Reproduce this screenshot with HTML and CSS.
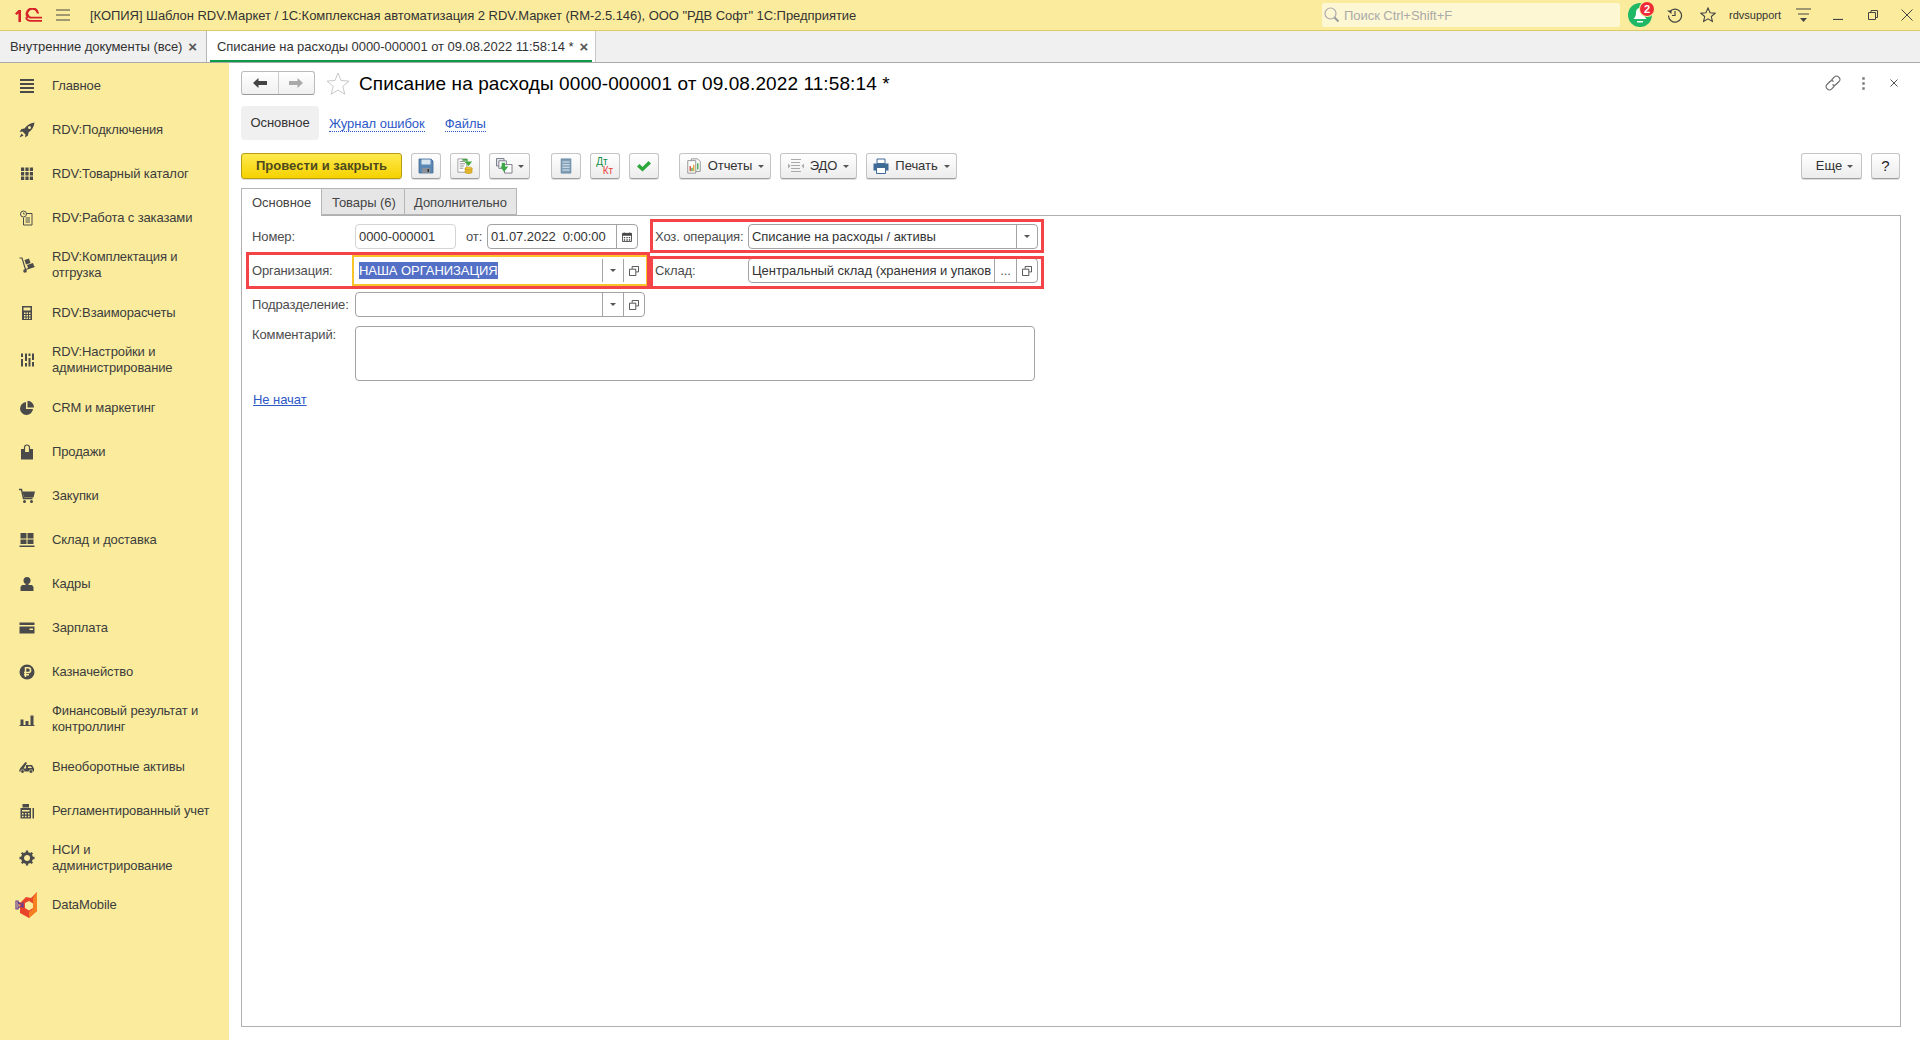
FILE: index.html
```html
<!DOCTYPE html>
<html lang="ru">
<head>
<meta charset="utf-8">
<title>Списание на расходы</title>
<link rel="stylesheet" href="styles.css">
</head>
<body>
<svg class="defs" width="0" height="0" aria-hidden="true">
  <symbol id="popup" viewBox="0 0 11 11"><path d="M3.500 3V.5h7v6H8" fill="none" stroke="#444"/><path d="M.5 3.500h7v7h-7z" fill="none" stroke="#444"/></symbol>
</svg>
<header class="topbar">
  <svg class="logo" viewBox="0 0 28 15"><path d="M1 5.500 4.500 2H7v12H4.400V5.400L2.600 7z" fill="#d6232a"/><path d="M24 6.500A5.600 5.600 0 1 0 14 10.500" fill="none" stroke="#d6232a" stroke-width="2.400" transform="translate(0 -1)"/><path d="M12 9.200c.6 2.600 2.600 3.600 5 3.600H28M13.800 6.500c.5 2 1.700 3.200 3.600 3.200H28" fill="none" stroke="#d6232a" stroke-width="1.800"/></svg>
  <svg class="burger" viewBox="0 0 14 12"><path d="M0 1h14M0 6h14M0 11h14" stroke="#444" stroke-width="1.200"/></svg>
  <div class="apptitle">[КОПИЯ] Шаблон RDV.Маркет / 1С:Комплексная автоматизация 2 RDV.Маркет (RM-2.5.146), ООО "РДВ Софт" 1С:Предприятие</div>
  <div class="search">
    <svg class="search-ico" viewBox="0 0 16 16"><circle cx="6.500" cy="6.500" r="5.500" fill="none" stroke="#aaa" stroke-width="1.200"/><path d="m10.500 10.500 4 4" stroke="#999" stroke-width="2"/></svg>
    <span>Поиск Ctrl+Shift+F</span>
  </div>
  <div class="bell">
    <svg class="bell-ico" viewBox="0 0 24 24"><circle cx="12" cy="12" r="12" fill="#1fb866"/><path d="M12 5c-3 0-4 2.500-4 5 0 3-1 4.500-2.500 6h13C17 14.500 16 13 16 10c0-2.500-1-5-4-5z" fill="#fff"/><path d="M9 18h6v1.500H9z" fill="#fff"/></svg>
    <span class="badge">2</span>
  </div>
  <svg class="tb-ico history" viewBox="0 0 16 16"><path d="M3 4.500A6.500 6.500 0 1 1 1.500 8.500" fill="none" stroke="#444" stroke-width="1.200"/><path d="M0 3.500h4.500V7z" fill="#444"/><path d="M8 4v4.500h-3" fill="none" stroke="#444" stroke-width="1.200"/></svg>
  <svg class="tb-ico star-top" viewBox="0 0 16 16"><path d="m8 1 2.100 4.700 5 .5-3.800 3.300 1.100 5L8 11.900l-4.400 2.600 1.100-5L.9 6.200l5-.5z" fill="none" stroke="#444" stroke-width="1.100"/></svg>
  <span class="user">rdvsupport</span>
  <svg class="tb-ico usermenu" viewBox="0 0 15 16"><path d="M0 2h15M2 7h11" stroke="#444" stroke-width="1.100"/><path d="M4 11h7l-3.500 4z" fill="#444"/></svg>
  <svg class="win minimize" viewBox="0 0 10 10"><path d="M0 9.500h10" stroke="#444" stroke-width="1.200"/></svg>
  <svg class="win restore" viewBox="0 0 10 10"><path d="M3 2.500V.5h6.500v7H7.500" fill="none" stroke="#444"/><path d="M.5 2.500h7v7h-7z" fill="none" stroke="#444"/></svg>
  <svg class="win closewin" viewBox="0 0 12 12"><path d="m.5.500 11 11m0-11-11 11" stroke="#444" stroke-width="1"/></svg>
</header>

<nav class="tabstrip">
  <div class="wintab"><span>Внутренние документы (все)</span><b class="x">×</b></div>
  <div class="wintab active"><span>Списание на расходы 0000-000001 от 09.08.2022 11:58:14 *</span><b class="x">×</b></div>
</nav>

<div class="workspace">
  <aside class="sidebar">
    <div class="item"><svg viewBox="0 0 16 16"><path d="M1 2h14M1 6h14M1 10h14M1 14h14" stroke="#4a4a4a" stroke-width="2"/></svg><span>Главное</span></div>
    <div class="item"><svg viewBox="0 0 16 16"><path d="M15.500.5C11 1 8 3 5.500 6.500L2.500 7 .5 10l3-.5 3 3L6 15.500l3-2 .5-3C13 8 15 5 15.500.5z" fill="#4a4a4a"/><circle cx="10.500" cy="5.500" r="1.500" fill="#fbec9d"/><path d="M2.500 11.500 .5 15.500l4-2z" fill="#4a4a4a"/></svg><span>RDV:Подключения</span></div>
    <div class="item"><svg viewBox="0 0 16 16"><path d="M2 1.500h3.200v3.500H2zM6.400 1.500h3.200v3.500H6.400zM10.800 1.500H14v3.500h-3.200zM2 6h3.200v3.500H2zM6.400 6h3.200v3.500H6.400zM10.800 6H14v3.500h-3.200zM2 10.500h3.200V14H2zM6.400 10.500h3.200V14H6.400zM10.800 10.500H14V14h-3.200z" fill="#4a4a4a"/></svg><span>RDV:Товарный каталог</span></div>
    <div class="item"><svg viewBox="0 0 16 16"><circle cx="4.500" cy="4" r="3" fill="none" stroke="#4a4a4a"/><path d="M4.500 2.500V4h1.500" fill="none" stroke="#4a4a4a" stroke-width=".8"/><path d="M7.500 3.500h5.500v11.500H4.500V7.500" fill="none" stroke="#4a4a4a"/><path d="M6.500 8h4.500M6.500 10h4.500M6.500 12h4.500" stroke="#4a4a4a"/></svg><span>RDV:Работа с заказами</span></div>
    <div class="item"><svg viewBox="0 0 16 16"><path d="M.5 1H3l3.500 11.500 9-3" fill="none" stroke="#4a4a4a" stroke-width="1.200"/><circle cx="6" cy="14" r="1.800" fill="#4a4a4a"/><path d="m5.500 3 4.500-1.500 1.500 4.500-4.500 1.500zM8 8l6-2 1.300 3.800-6 2z" fill="#4a4a4a"/></svg><span>RDV:Комплектация и<br>отгрузка</span></div>
    <div class="item"><svg viewBox="0 0 16 16"><path d="M3 1h10v14H3z" fill="#4a4a4a"/><path d="M4.500 2.500h7v3h-7zM5 7.500h1.500V9H5zM7.500 7.500H9V9H7.500zM10 7.500h1.500V9H10zM5 10h1.500v1.500H5zM7.500 10H9v1.500H7.500zM10 10h1.500v1.500H10zM5 12.500h1.500V14H5zM7.500 12.500H9V14H7.500zM10 12.500h1.500V14H10z" fill="#fbec9d"/></svg><span>RDV:Взаиморасчеты</span></div>
    <div class="item"><svg viewBox="0 0 16 16"><path d="M3 1.500v3.500M3 7v7.500M7 1.500V9M7 11v3.500M10.500 1.500V4M10.500 6v8.500M14 1.500V8M14 10v4.500" stroke="#4a4a4a" stroke-width="2"/></svg><span>RDV:Настройки и<br>администрирование</span></div>
    <div class="item"><svg viewBox="0 0 16 16"><path d="M7 2a6.500 6.500 0 1 0 7 7H7z" fill="#4a4a4a"/><path d="M8.500.8v6.700H15A6.700 6.700 0 0 0 8.500.8z" fill="#4a4a4a"/></svg><span>CRM и маркетинг</span></div>
    <div class="item"><svg viewBox="0 0 16 16"><path d="M2 5h12v10.500H2z" fill="#4a4a4a"/><path d="M5.500 8V3.500a2.500 2.500 0 0 1 5 0V8" fill="none" stroke="#4a4a4a" stroke-width="1.200"/><path d="M6.100 5h3.800v3H6.100z" fill="#fbec9d"/></svg><span>Продажи</span></div>
    <div class="item"><svg viewBox="0 0 16 16"><path d="M0 1.500h2.500l2 9h9" fill="none" stroke="#4a4a4a" stroke-width="1.400"/><path d="M3.500 3.500H16l-1.500 6H5z" fill="#4a4a4a"/><circle cx="5.500" cy="13.500" r="1.500" fill="#4a4a4a"/><circle cx="12.500" cy="13.500" r="1.500" fill="#4a4a4a"/></svg><span>Закупки</span></div>
    <div class="item"><svg viewBox="0 0 16 16"><path d="M1.500 1h6v5.500h-6zM8.500 1h6v5.500h-6zM1.500 7.500h6V12h-6zM8.500 7.500h6V12h-6zM.5 13.500h15V15H.5z" fill="#4a4a4a"/></svg><span>Склад и доставка</span></div>
    <div class="item"><svg viewBox="0 0 16 16"><circle cx="8" cy="4.500" r="3.500" fill="#4a4a4a"/><path d="M6.500 7.500h3V9h3.500l1.500 2v4H1.500v-4L3 9h3.500z" fill="#4a4a4a"/></svg><span>Кадры</span></div>
    <div class="item"><svg viewBox="0 0 16 16"><path d="M.5 2.500h15v2.500H.5zM.5 6.500h15v7H.5z" fill="#4a4a4a"/><path d="M10.500 8.500h3.500V10h-3.500z" fill="#fbec9d"/></svg><span>Зарплата</span></div>
    <div class="item"><svg viewBox="0 0 16 16"><circle cx="8" cy="8" r="7.500" fill="#4a4a4a"/><path d="M6.500 13V3.800h2.700a2.400 2.400 0 0 1 0 4.800H5M5 10.800h5" fill="none" stroke="#fbec9d" stroke-width="1.500"/></svg><span>Казначейство</span></div>
    <div class="item"><svg viewBox="0 0 16 16"><path d="M1.500 8.500h3v5.500h-3zM6.500 10h3v4h-3zM11.500 4.500h3V14h-3z" fill="#4a4a4a"/><path d="M.5 14.500h15" stroke="#4a4a4a"/></svg><span>Финансовый результат и<br>контроллинг</span></div>
    <div class="item"><svg viewBox="0 0 16 16"><path d="M1 9.500 6.500 3l1.500 1-3.500 5.500h2.500V6h6l2 3.500v3h-15z" fill="#4a4a4a"/><circle cx="3.500" cy="12.500" r="1.800" fill="#4a4a4a" stroke="#fbec9d" stroke-width=".6"/><circle cx="12" cy="12.500" r="1.800" fill="#4a4a4a" stroke="#fbec9d" stroke-width=".6"/><path d="M9 7.500h3l1 1.500H9z" fill="#fbec9d"/></svg><span>Внеоборотные активы</span></div>
    <div class="item"><svg viewBox="0 0 16 16"><path d="M1.500 5h10.500v10.500H1.500zM3.500 1h6.500v3.500H3.500zM13.500 5h1.500v10.500h-1.500z" fill="#4a4a4a"/><path d="M3 7h7.500v1.500H3zM3 10h1.500v1.500H3zM6 10h1.500v1.500H6zM9 10h1.500v1.500H9zM3 12.800h1.500v1.500H3zM6 12.800h1.500v1.500H6zM9 12.800h1.500v1.500H9z" fill="#fbec9d"/></svg><span>Регламентированный учет</span></div>
    <div class="item"><svg viewBox="0 0 16 16"><circle cx="8" cy="8" r="4.500" fill="none" stroke="#4a4a4a" stroke-width="3"/><path d="M8 .5v15M.5 8h15M2.700 2.700l10.600 10.600M13.300 2.700 2.700 13.300" stroke="#4a4a4a" stroke-width="2.300" stroke-dasharray="3.200 9"/></svg><span>НСИ и<br>администрирование</span></div>
    <div class="item last"><svg class="dm" viewBox="0 0 24 26"><path d="M16 6 22 0v19l-8 7-9-5v-6l-1-3 7-7z" fill="#e9452b"/><path d="M22 0v19l-8 7v-6l4-3V6z" fill="#f58020"/><path d="M10 11l4-2 4 2.500V16l-4 2.500L10 16z" fill="#fbec9d"/><path d="M1 9v8h2V9zM3 10l5 3-5 3zM8 10v6" fill="none" stroke="#6a3d8f" stroke-width="1.200"/></svg><span>DataMobile</span></div>
  </aside>

  <main class="content">
    <div class="docheader">
      <div class="navbtns">
        <span class="navbtn"><svg viewBox="0 0 14 10"><path d="M0 5 5.500 0v3H14v4H5.500v3z" fill="#444"/></svg></span>
        <span class="navbtn"><svg viewBox="0 0 14 10"><path d="M14 5 8.500 0v3H0v4h8.500v3z" fill="#aaa"/></svg></span>
      </div>
      <svg class="favstar" viewBox="0 0 24 23"><path d="m12 1 3 7.500 8 .6-6.200 5.200 2 7.900L12 18l-6.800 4.200 2-7.900L1 9.100l8-.6z" fill="#fff" stroke="#c8c8c8"/></svg>
      <h1 class="doctitle">Списание на расходы 0000-000001 от 09.08.2022 11:58:14 *</h1>
      <div class="docactions">
        <svg class="link-ico" viewBox="0 0 16 16"><path d="M6.500 5 9.500 2a2.500 2.500 0 0 1 4 0l.5.500a2.500 2.500 0 0 1 0 4L11 9.500a2.500 2.500 0 0 1-3.500 0M9.500 11l-3 3a2.500 2.500 0 0 1-4 0l-.5-.5a2.500 2.500 0 0 1 0-4L5 6.500a2.500 2.500 0 0 1 3.500 0" fill="none" stroke="#666" stroke-width="1.100"/></svg>
        <svg class="dots" viewBox="0 0 3 13"><path d="M.3.300h2.400v2.400H.3zM.3 5.300h2.400v2.400H.3zM.3 10.300h2.400v2.400H.3z" fill="#777"/></svg>
        <svg class="closeform" viewBox="0 0 8 8"><path d="m.5.500 7 7m0-7-7 7" stroke="#555" stroke-width="1"/></svg>
      </div>
    </div>

    <div class="pagelinks">
      <span class="page current">Основное</span>
      <a class="page link">Журнал ошибок</a>
      <a class="page link">Файлы</a>
    </div>

    <div class="commandbar">
      <button class="btn primary">Провести и закрыть</button>
      <button class="btn icon"><svg viewBox="0 0 16 16"><path d="M1 1h12l2 2v12H1z" fill="#5b87b5" stroke="#3f6a96" stroke-width=".8"/><path d="M3.500 1.500h9v5h-9z" fill="#dbe6f0"/><path d="M4 10h8v5H4z" fill="#8a9099"/><path d="M9.500 11h1.500v3H9.500z" fill="#333"/></svg></button>
      <button class="btn icon"><svg viewBox="0 0 18 18"><path d="M1 1h10v15H1z" fill="#fff" stroke="#999"/><path d="M3 4h6M3 6.500h6M3 9h5M3 11.500h4" stroke="#888"/><path d="M6 1h6v3H17l-4 5-5-5h3.500V3H6z" fill="#43a83e"/><ellipse cx="13" cy="11.500" rx="4" ry="1.500" fill="#f0c83a" stroke="#b98f10" stroke-width=".5"/><path d="M9 11.500V16c0 1 2 1.700 4 1.700s4-.7 4-1.700v-4.500c0 1-2 1.500-4 1.500s-4-.5-4-1.500z" fill="#e2b52c" stroke="#b98f10" stroke-width=".5"/></svg></button>
      <button class="btn iconcaret"><svg viewBox="0 0 18 17"><path d="M.5.500h8v8h-8z" fill="#dfe5ea" stroke="#778"/><path d="M3 3h8v8H3z" fill="#fff" stroke="#778"/><path d="M9 7h8v9H9z" fill="#fff" stroke="#778"/><path d="M6 5h3.500v4H13l-4.500 6-4-6H6z" fill="#3da848"/></svg><i class="caret"></i></button>
      <span class="spacer"></span>
      <button class="btn icon"><svg viewBox="0 0 14 18"><path d="M1.500 1h11v16h-11z" fill="#7f9fb8" stroke="#5e7f99" stroke-width=".8"/><path d="M3 4.500h8M3 7.500h8M3 10.500h8M3 13.500h8" stroke="#dde7ee" stroke-width="1.200"/></svg></button>
      <button class="btn icon dtkt"><span class="dt">Дт</span><span class="kt">Кт</span></button>
      <button class="btn icon"><svg viewBox="0 0 16 12"><path d="M1 6.500 3.500 4l3 3L12.500 1 15 3.500 6.500 11.500z" fill="#2aa63a"/></svg></button>
      <span class="spacer narrow"></span>
      <button class="btn text reports"><svg viewBox="0 0 16 18"><path d="M5 1h7l3 3v11H5z" fill="#fff" stroke="#888"/><path d="M1 3h9v14H1z" fill="#fff" stroke="#888"/><path d="M3 9h1.500v6H3z" fill="#d9443b"/><path d="M5 11h1.500v4H5z" fill="#3aa348"/><path d="M7 7.500h1.500V15H7z" fill="#e0a526"/><path d="M11.500 6h1.500v7h-1.500z" fill="#3aa348"/></svg><span>Отчеты</span><i class="caret"></i></button>
      <button class="btn text edo"><svg viewBox="0 0 16 16"><path d="M3 1.500h10M3 4.500h9M3 7.500h9M3 10.500h9M3 13.500h10" stroke="#aaa" stroke-width="1.100"/><path d="M0 5.500 2.500 8 0 10.500zM16 5.500 13.500 8l2.500 2.500z" fill="#aaa"/></svg><span>ЭДО</span><i class="caret"></i></button>
      <button class="btn text print"><svg viewBox="0 0 16 16"><path d="M4 1h8v4.500H4z" fill="#fff" stroke="#3f6a96"/><path d="M.5 5.500h15v7h-15z" fill="#3f6a96"/><path d="M3.500 9.500h9v6h-9z" fill="#fff" stroke="#3f6a96"/></svg><span>Печать</span><i class="caret"></i></button>
      <span class="grow"></span>
      <button class="btn more"><span>Еще</span><i class="caret"></i></button>
      <button class="btn help">?</button>
    </div>

    <div class="formtabs">
      <span class="ftab current">Основное</span>
      <span class="ftab">Товары (6)</span>
      <span class="ftab">Дополнительно</span>
    </div>

    <section class="panel">
      <div class="row">
        <div class="col-left">
          <label class="lbl">Номер:</label>
          <div class="field number"><span class="val">0000-000001</span></div>
          <label class="lbl from">от:</label>
          <div class="field date"><span class="val">01.07.2022&nbsp; 0:00:00</span><span class="fbtn"><svg viewBox="0 0 11 11" class="cal"><path d="M.5 1.500h10v9H.5z" fill="none" stroke="#444"/><path d="M.5 1.500h10V4H.5zM2 .500h1V2H2zM8 .500h1V2H8z" fill="#444"/><path d="M2 5.500h1.500V7H2zM4.800 5.500h1.500V7H4.800zM7.500 5.500H9V7H7.500zM2 8h1.500v1.500H2zM4.800 8h1.500v1.500H4.800zM7.500 8H9v1.500H7.500z" fill="#444"/></svg></span></div>
        </div>
        <div class="col-right">
          <label class="lbl op">Хоз. операция:</label>
          <div class="field wide"><span class="val">Списание на расходы / активы</span><span class="fbtn"><i class="caret"></i></span></div>
        </div>
      </div>
      <div class="row">
        <div class="col-left">
          <label class="lbl">Организация:</label>
          <div class="field long focused"><span class="val"><mark class="selected">НАША ОРГАНИЗАЦИЯ</mark></span><span class="fbtn"><i class="caret"></i></span><span class="fbtn"><svg class="pop"><use href="#popup"/></svg></span></div>
        </div>
        <div class="col-right">
          <label class="lbl op">Склад:</label>
          <div class="field wide"><span class="val">Центральный склад (хранения и упаков</span><span class="fbtn ell">...</span><span class="fbtn"><svg class="pop"><use href="#popup"/></svg></span></div>
        </div>
      </div>
      <div class="row">
        <div class="col-left">
          <label class="lbl">Подразделение:</label>
          <div class="field long"><span class="val"></span><span class="fbtn"><i class="caret"></i></span><span class="fbtn"><svg class="pop"><use href="#popup"/></svg></span></div>
        </div>
      </div>
      <div class="row comment">
        <label class="lbl">Комментарий:</label>
        <div class="field area"></div>
      </div>
      <a class="status">Не начат</a>
      <div class="redbox rb-org"></div>
      <div class="redbox rb-op"></div>
      <div class="redbox rb-store"></div>
    </section>
  </main>
</div>
</body>
</html>
```
FILE: styles.css
```css
* { box-sizing: border-box; }
html, body { margin: 0; height: 100%; }
body {
  width: 1920px; height: 1040px; overflow: hidden; background: #fff;
  font: 13px/16px "Liberation Sans", Arial, sans-serif; letter-spacing: -0.05px; color: #333;
  display: flex; flex-direction: column;
}
.defs { position: absolute; }
svg { display: block; flex: none; }

/* top bar */
.topbar { height: 31px; flex: none; background: #fbec9d; border-bottom: 1px solid #dccb62; display: flex; align-items: center; }
.logo { width: 28px; height: 15px; margin-left: 14px; }
.burger { width: 14px; height: 12px; margin-left: 14px; }
.apptitle { margin-left: 20px; width: 1232px; padding-top: 1px; white-space: nowrap; color: #333; }
.search { width: 298px; height: 24px; background: #fdf7d3; border-radius: 2px; display: flex; align-items: center; color: #aaa; }
.search span { padding-top: 1px; }
.search-ico { width: 16px; height: 16px; margin: 0 4px 0 2px; }
.bell { position: relative; width: 24px; height: 24px; margin-left: 8px; }
.bell-ico { width: 24px; height: 24px; }
.badge { position: absolute; left: 12px; top: -1px; width: 14px; height: 14px; border-radius: 50%; background: #ee2b36; color: #fff; font-size: 11px; font-weight: bold; line-height: 14px; text-align: center; box-shadow: 0 0 0 1px #fbec9d; }
.tb-ico { width: 16px; height: 16px; }
.history { margin-left: 15px; }
.star-top { margin-left: 17px; }
.user { margin-left: 13px; width: 67px; font-size: 11px; letter-spacing: 0; white-space: nowrap; }
.usermenu { width: 15px; }
.win { width: 10px; height: 10px; }
.minimize { margin-left: 22px; }
.restore { margin-left: 25px; }
.closewin { width: 12px; height: 12px; margin-left: 23px; }

/* window tabs */
.tabstrip { height: 32px; flex: none; background: #f0f0f0; border-bottom: 1px solid #a9a9a9; display: flex; }
.wintab { display: flex; align-items: center; height: 31px; padding-left: 10px; width: 206px; white-space: nowrap; color: #333; }
.wintab.active { width: 390px; background: #fff; padding-left: 10px; border-left: 1px solid #b5b5b5; border-right: 1px solid #c8c8c8; position: relative; }
.wintab.active::after { content: ""; position: absolute; left: 3px; right: 3px; bottom: 0; height: 2px; background: #0c9a48; }
.x { margin-left: 6px; font-size: 15px; color: #555; }

/* layout */
.workspace { flex: 1; display: flex; min-height: 0; }
.sidebar { width: 229px; flex: none; background: #fbec9d; }
.item { display: flex; align-items: center; min-height: 44px; padding: 10px 0 9px 19px; color: #3c3c3c; line-height: 16px; white-space: nowrap; letter-spacing: -0.12px; }
.item.last { margin-top: -1px; }
.item svg { width: 16px; height: 16px; margin-right: 17px; }
.item svg.dm { width: 24px; height: 26px; margin: 0 13px 0 -4px; }
.content { flex: 1; padding: 8px 19px 13px 12px; display: flex; flex-direction: column; min-width: 0; }

/* header */
.docheader { display: flex; align-items: center; height: 24px; }
.navbtns { display: flex; width: 74px; height: 24px; border: 1px solid #bbb; border-bottom-color: #999; border-radius: 3px; background: linear-gradient(#fff, #f0f0f0); }
.navbtn { flex: 1; display: flex; align-items: center; justify-content: center; }
.navbtn + .navbtn { border-left: 1px solid #ccc; }
.navbtn svg { width: 14px; height: 10px; }
.favstar { width: 24px; height: 23px; margin-left: 11px; }
.doctitle { margin: 0 0 0 9px; font-size: 19px; letter-spacing: 0.1px; font-weight: normal; line-height: 24px; padding-top: 1px; color: #000; white-space: nowrap; }
.docactions { margin-left: auto; display: flex; align-items: center; }
.link-ico { width: 16px; height: 16px; }
.dots { width: 3px; height: 13px; margin-left: 21px; }
.closeform { width: 8px; height: 8px; margin: 0 3px 0 25px; }

/* page links */
.pagelinks { display: flex; align-items: center; height: 34px; margin-top: 11px; flex: none; }
.page { height: 34px; line-height: 34px; }
.page.current { width: 78px; text-align: center; background: #f0f0f0; border-radius: 4px; margin-right: 10px; color: #333; }
.page.link { margin-right: 20px; color: #2d59c6; height: auto; line-height: 15px; margin-top: 2px; border-bottom: 1px dotted #2d59c6; }

/* command bar */
.commandbar { display: flex; height: 26px; margin: 13px 1px 0 0; gap: 9px; flex: none; }
.btn { height: 26px; padding: 0; border: 1px solid #c4c4c4; border-bottom-color: #a0a0a0; border-radius: 3px; background: linear-gradient(#fff, #ececec); font: inherit; letter-spacing: inherit; color: #333; display: flex; align-items: center; justify-content: center; box-shadow: 0 1px 0 #ddd; }
.btn.primary { width: 161px; background: linear-gradient(#ffe94e, #f6d200); border-color: #b89c14; font-weight: bold; font-size: 13px; letter-spacing: 0.05px; color: #4c4a1e; }
.btn.icon { width: 30px; }
.btn.icon svg { width: 16px; height: 16px; }
.btn.iconcaret { width: 41px; gap: 5px; }
.btn.iconcaret svg { width: 17px; height: 16px; }
.spacer { width: 3px; }
.spacer.narrow { width: 2px; }
.dtkt { position: relative; font-size: 10px; line-height: 9px; font-weight: normal; flex-direction: column; }
.dt { color: #0e8f46; margin-left: -6px; }
.kt { color: #e8413a; margin-left: 6px; }
.btn.text { gap: 6px; padding: 0; }
.btn.text svg { width: 16px; height: 16px; }
.reports { width: 92px; }
.edo { width: 77px; }
.print { width: 91px; }
.grow { flex: 1; }
.btn.more { width: 61px; gap: 5px; padding-left: 6px; }
.btn.help { width: 29px; font-size: 15px; color: #222; }
.caret { display: inline-block; width: 0; height: 0; border: 3.5px solid transparent; border-top: 3.5px solid #555; border-bottom: 0; flex: none; }

/* form tabs */
.formtabs { display: flex; height: 28px; margin-top: 9px; flex: none; position: relative; z-index: 1; margin-bottom: -1px; }
.ftab { padding: 0 10px; height: 27px; line-height: 27px; background: #e6e6e6; border: 1px solid #b5b5b5; border-left: 0; color: #444; white-space: nowrap; }
.ftab:nth-child(1) { width: 81px; }
.ftab:nth-child(2) { width: 83px; }
.ftab:nth-child(3) { width: 112px; padding-left: 9px; }
.ftab.current { height: 28px; background: #fff; border-left: 1px solid #b5b5b5; border-bottom: 0; }

/* panel */
.panel { flex: 1; position: relative; border: 1px solid #b0b0b0; padding: 8px 10px; }
.row { display: flex; height: 25px; margin-bottom: 9px; align-items: center; }
.col-left { display: flex; align-items: center; width: 403px; }
.col-right { display: flex; align-items: center; }
.lbl { width: 103px; padding-top: 1px; flex: none; color: #4c4c4c; white-space: nowrap; letter-spacing: -0.12px; }
.lbl.from { width: 21px; margin-left: 10px; }
.lbl.op { width: 93px; }
.field { height: 25px; background: #fff; border: 1px solid #a3a3a3; border-radius: 4px; display: flex; align-items: stretch; overflow: hidden; flex: none; }
.val { flex: 1; min-width: 0; padding-left: 3px; line-height: 24px; white-space: nowrap; overflow: hidden; color: #333; }
.number { width: 101px; border-color: #d4d4d4; }
.date { width: 151px; }
.long { width: 290px; }
.wide { width: 290px; }
.area { width: 680px; height: 55px; }
.fbtn { width: 21px; flex: none; border-left: 1px solid #a3a3a3; display: flex; align-items: center; justify-content: center; color: #555; }
.ell { width: 22px; line-height: 26px; }
.pop { width: 10px; height: 10px; }
.cal { width: 10px; height: 10px; }
.focused { border-color: #fff; outline: 2px solid #f9c42a; outline-offset: 1px; border-radius: 0; overflow: visible; }
.selected { background: #5470c6; color: #fff; padding: 1px 0; }
.comment { height: 55px; margin-bottom: 10px; align-items: flex-start; }
.comment .lbl { padding-top: 1px; }
.status { display: inline-block; margin-left: 1px; color: #2d59c6; text-decoration: underline; line-height: 16px; margin-top: 1px; }
.redbox { position: absolute; border: 3px solid #f44447; pointer-events: none; }
.rb-org { left: 4px; top: 36px; width: 404px; height: 37px; }
.rb-op { left: 408px; top: 3px; width: 394px; height: 34px; }
.rb-store { left: 408px; top: 40px; width: 394px; height: 33px; }
```
